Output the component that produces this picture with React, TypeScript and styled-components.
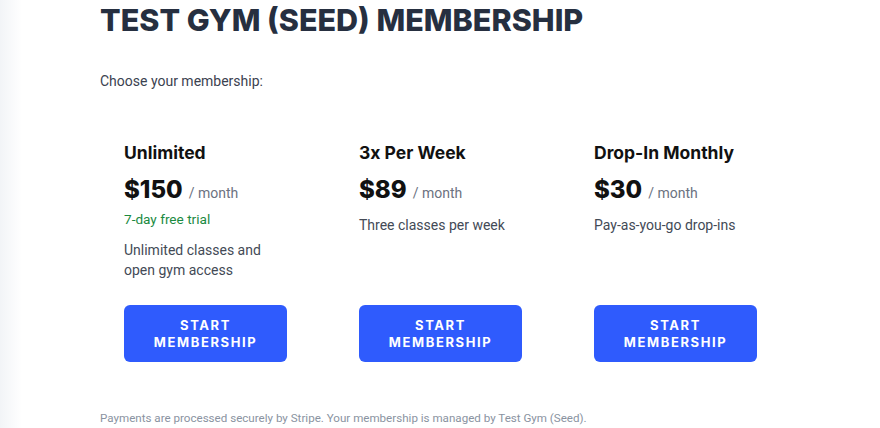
import styled, { createGlobalStyle } from 'styled-components';

const GlobalStyle = createGlobalStyle`
  html, body {
    margin: 0;
    padding: 0;
    background: #ffffff;
    font-family: Inter, "Noto Sans", sans-serif;
  }
`;

const Shell = styled.div`
  display: flex;
  min-height: 428px;
`;

const EdgeShade = styled.div`
  width: 22px;
  flex-shrink: 0;
  background: linear-gradient(to right, #f2f4f7, #ffffff);
`;

const Main = styled.main`
  flex: 1;
  padding: 0 0 0 78px;
`;

const Title = styled.h1`
  margin: 0;
  padding-top: 1px;
  font-size: 30.5px;
  line-height: 38px;
  font-weight: 800;
  color: #262f40;
`;

const Lead = styled.p`
  margin: 32px 0 0;
  font-family: Roboto, "Noto Sans", sans-serif;
  font-size: 14px;
  line-height: 20px;
  color: #3b4250;
`;

const PlanGrid = styled.div`
  display: grid;
  grid-template-columns: repeat(3, 211px);
  gap: 24px;
  margin-top: 40px;
`;

const PlanCard = styled.div`
  display: flex;
  flex-direction: column;
  align-items: flex-start;
  padding: 10px 24px 0;
`;

const PlanInfo = styled.div`
  flex: 1;
`;

const PlanName = styled.h2`
  margin: 0;
  font-size: 17.5px;
  line-height: 24px;
  font-weight: 700;
  color: #111111;
`;

const PriceRow = styled.div`
  display: flex;
  align-items: baseline;
  gap: 6px;
  margin-top: 9px;
`;

const Amount = styled.span`
  font-size: 24px;
  line-height: 32px;
  font-weight: 800;
  color: #111111;
`;

const Period = styled.span`
  font-family: Roboto, "Noto Sans", sans-serif;
  font-size: 14px;
  color: #6b7280;
`;

const Trial = styled.div`
  margin-top: 4px;
  font-family: Roboto, "Noto Sans", sans-serif;
  font-size: 13.6px;
  line-height: 18px;
  color: #1b8a3f;
`;

const Description = styled.p<{ $afterTrial?: boolean }>`
  margin: ${({ $afterTrial }) => ($afterTrial ? '12px' : '9px')} 0 0;
  font-family: Roboto, "Noto Sans", sans-serif;
  font-size: 14px;
  line-height: 20px;
  color: #434a56;
`;

const StartButton = styled.button`
  margin-top: 25px;
  width: 163px;
  height: 57px;
  padding: 0 18px;
  border: none;
  border-radius: 6px;
  background: #2f5bfd;
  color: #ffffff;
  font-family: inherit;
  font-size: 13px;
  line-height: 17px;
  font-weight: 700;
  letter-spacing: 1.6px;
  text-transform: uppercase;
  cursor: pointer;
`;

const Footnote = styled.p`
  margin: 48px 0 0;
  font-family: Roboto, "Noto Sans", sans-serif;
  font-size: 11.6px;
  line-height: 16px;
  color: #8a93a1;
`;

const plans = [
  {
    name: 'Unlimited',
    price: '$150',
    trial: '7-day free trial',
    description: 'Unlimited classes and open gym access',
  },
  {
    name: '3x Per Week',
    price: '$89',
    description: 'Three classes per week',
  },
  {
    name: 'Drop-In Monthly',
    price: '$30',
    description: 'Pay-as-you-go drop-ins',
  },
];

export default function App() {
  return (
    <>
      <GlobalStyle />
      <Shell>
        <EdgeShade />
        <Main>
          <Title>TEST GYM (SEED) MEMBERSHIP</Title>
          <Lead>Choose your membership:</Lead>
          <PlanGrid>
            {plans.map((plan) => (
              <PlanCard key={plan.name}>
                <PlanInfo>
                  <PlanName>{plan.name}</PlanName>
                  <PriceRow>
                    <Amount>{plan.price}</Amount>
                    <Period>/ month</Period>
                  </PriceRow>
                  {plan.trial && <Trial>{plan.trial}</Trial>}
                  <Description $afterTrial={!!plan.trial}>{plan.description}</Description>
                </PlanInfo>
                <StartButton>Start membership</StartButton>
              </PlanCard>
            ))}
          </PlanGrid>
          <Footnote>
            Payments are processed securely by Stripe. Your membership is managed by Test Gym (Seed).
          </Footnote>
        </Main>
      </Shell>
    </>
  );
}
